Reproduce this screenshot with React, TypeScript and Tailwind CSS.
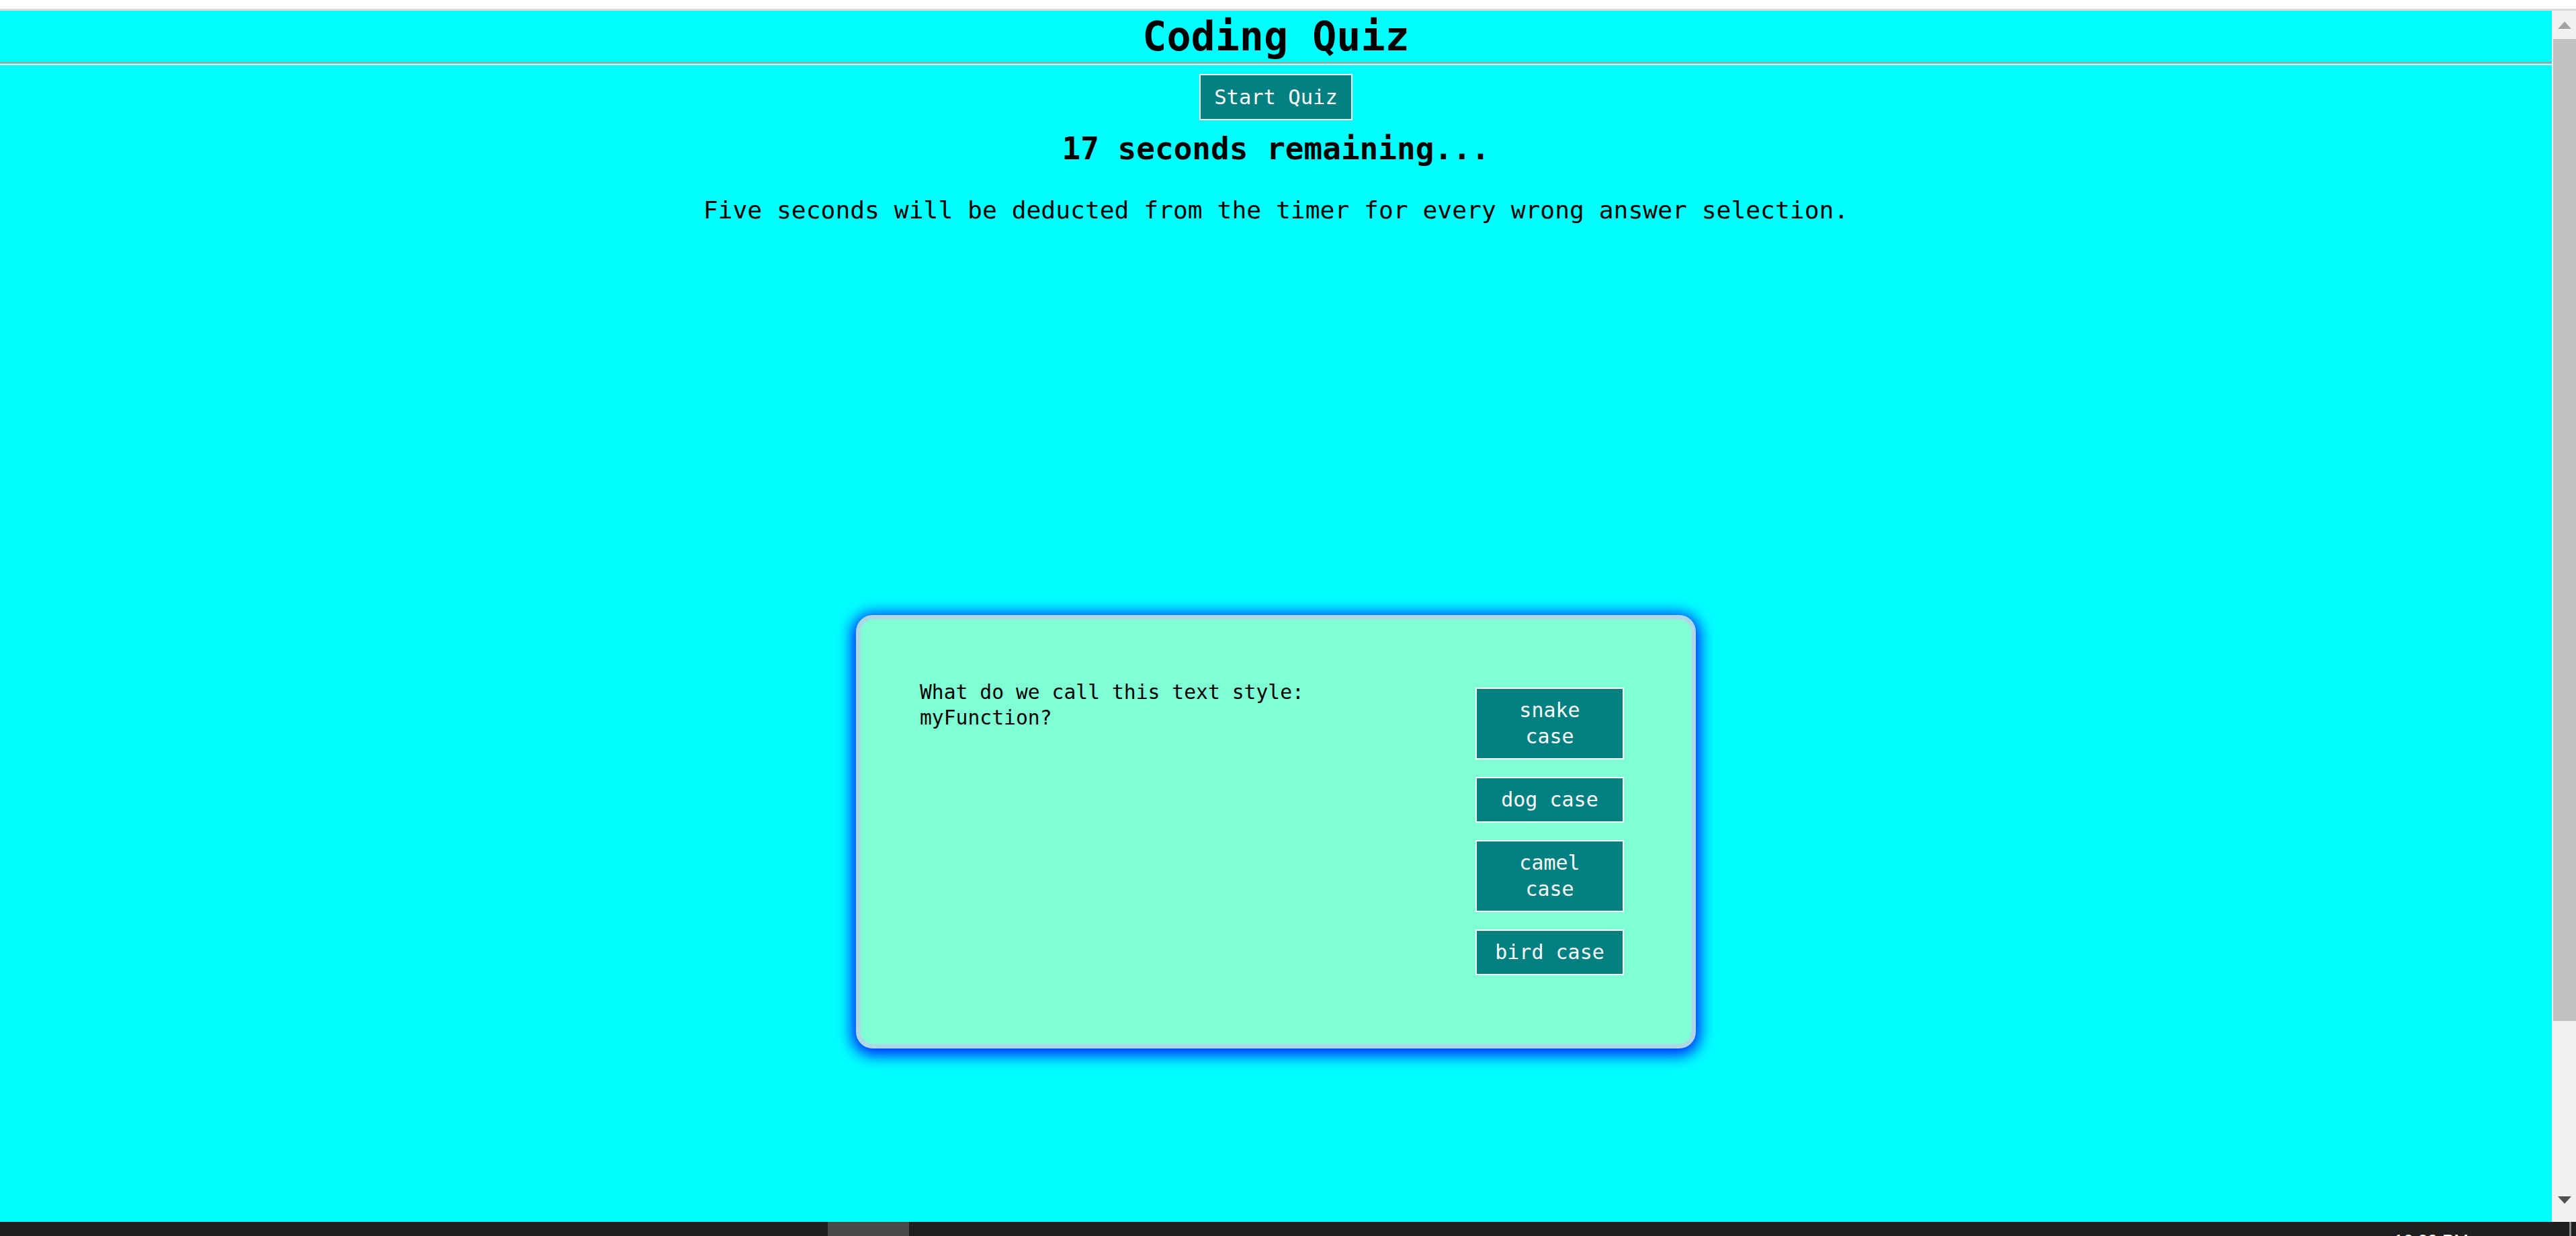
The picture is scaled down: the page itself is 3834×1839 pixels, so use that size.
import React from "react";

const answers = ["snake case", "dog case", "camel case", "bird case"];

function ScrollBar() {
  return (
    <div className="flex w-[36px] shrink-0 flex-col bg-[#f1f1f1]">
      <div className="flex h-[42px] items-center justify-center pl-[2px]">
        <svg width="20" height="11" viewBox="0 0 20 11">
          <polygon points="10,0 20,11 0,11" fill="#a3a3a3" />
        </svg>
      </div>
      <div className="ml-[2px] h-[1461px] bg-[#c1c1c1]" />
      <div className="flex-1" />
      <div className="flex h-[38px] items-start justify-center pl-[2px]">
        <svg width="20" height="11" viewBox="0 0 20 11">
          <polygon points="0,0 20,0 10,11" fill="#505050" />
        </svg>
      </div>
    </div>
  );
}

export default function App() {
  return (
    <div className="flex h-[1839px] w-[3834px] flex-col overflow-hidden bg-white font-['DejaVu_Sans_Mono',monospace] text-black">
      <div className="h-[13px] shrink-0 bg-white" />
      <div className="h-[3px] shrink-0 bg-[#dadada]" />
      <div className="flex min-h-0 flex-1">
        <main className="flex flex-1 flex-col items-center bg-[#00ffff]">
          <header className="h-[78px] w-full border-b-2 border-[#a0a0a0] text-center">
            <h1 className="text-[60px] font-bold leading-[76px]">Coding Quiz</h1>
          </header>
          <div className="h-px w-full" />
          <div className="h-[2px] w-full bg-white" />

          <button className="mt-[13px] border-2 border-white bg-[#008080] px-[20px] py-[13px] text-[30.5px] leading-[39px] text-white">
            Start Quiz
          </button>
          <h2 className="mt-[15px] text-[46px] font-bold leading-[54px]">17 seconds remaining...</h2>
          <p className="mt-[44px] text-[36.3px] leading-[42px]">
            Five seconds will be deducted from the timer for every wrong answer selection.
          </p>

          <section className="mt-[581px] flex w-[1250px] justify-between rounded-[25px] border-[7px] border-[#add8e6] bg-[#7fffd4] pb-[102px] pl-[88px] pr-[100px] pt-[89px] shadow-[0_4px_22px_6px_#0022ff]">
            <p className="w-[620px] text-[29.7px] leading-[38px]">What do we call this text style: myFunction?</p>
            <div className="mt-[12px] flex w-[221px] flex-col gap-[26px]">
              {answers.map((a) => (
                <button
                  key={a}
                  className="border-2 border-white bg-[#008080] px-[20px] pb-[13px] pt-[12px] text-center text-[30px] leading-[39px] text-white"
                >
                  {a}
                </button>
              ))}
            </div>
          </section>
        </main>
        <ScrollBar />
      </div>
      <footer className="relative flex h-[21px] shrink-0 overflow-hidden bg-[#1f1f1f]">
        <div className="ml-[1232px] h-full w-[121px] bg-[#4a4a4a]" />
        <span className="ml-auto mr-[150px] mt-[13px] text-[26px] leading-[30px] text-white font-['Liberation_Sans',sans-serif]">
          10:00 PM
        </span>
        <div className="mr-[7px] h-full w-[3px] bg-[#888888]" />
      </footer>
    </div>
  );
}
